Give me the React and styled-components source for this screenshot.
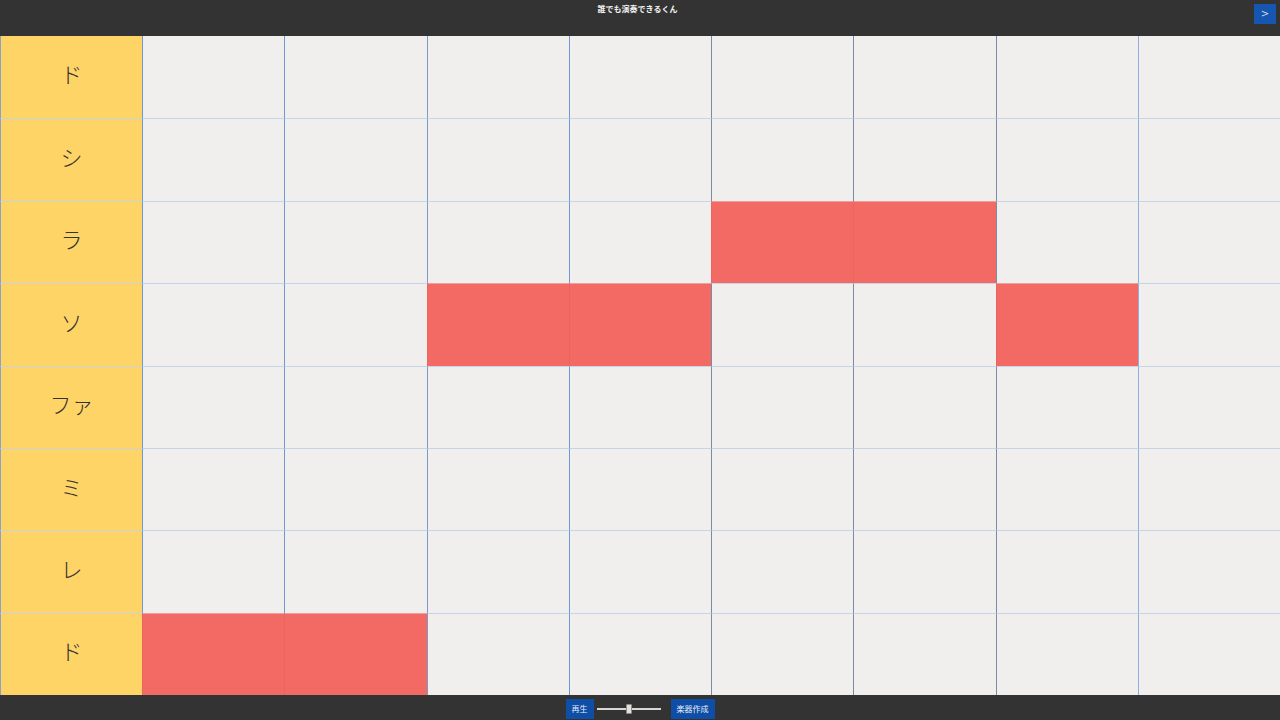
import React from "react";
import styled, { createGlobalStyle } from "styled-components";

const Global = createGlobalStyle`
  html, body { margin: 0; padding: 0; background: #333; }
  body { font-family: "Noto Sans CJK JP", "Noto Sans", sans-serif; }
  * { box-sizing: border-box; }
`;

const Page = styled.div`
  width: 1280px;
  height: 720px;
  display: flex;
  flex-direction: column;
  background: #333333;
  overflow: hidden;
`;

const Header = styled.header`
  height: 36px;
  flex: none;
  position: relative;
  display: flex;
  justify-content: center;
  align-items: flex-start;
`;

const Title = styled.h1`
  margin: 3px 0 0 -5px;
  font-size: 8px;
  font-weight: 700;
  color: #f2f2f2;
  line-height: 12px;
`;

const CornerButton = styled.button`
  position: absolute;
  top: 4px;
  right: 4px;
  width: 22px;
  height: 20px;
  border: none;
  padding: 0;
  background: #1656b0;
  color: #c9d8f0;
  font-family: "DejaVu Sans", sans-serif;
  font-size: 10px;
  line-height: 20px;
`;

const Grid = styled.div`
  height: 659px;
  flex: none;
  display: grid;
  grid-template-columns: repeat(9, 1fr);
  grid-template-rows: repeat(8, 1fr);
  background: #f0efee;
`;

const Label = styled.div`
  background: #ffd466;
  border-left: 1px solid #8aa3c4;
  border-top: ${(p) => (p.$first ? "none" : "1px solid #c8d3e0")};
  display: flex;
  align-items: center;
  justify-content: center;
  padding-bottom: 8px;
  font-size: 22px;
  font-weight: 300;
  color: #333;
`;

const Cell = styled.div`
  background: ${(p) => (p.$on ? "#f26a63" : "#f0efee")};
  border-left: 1px solid ${(p) => (p.$on ? "#e86560" : p.$line)};
  border-top: ${(p) => (p.$first ? "none" : p.$on ? "1px solid #eba09c" : "1px solid #c6d4e8")};
`;

const Footer = styled.footer`
  flex: 1;
  display: flex;
  justify-content: center;
  align-items: center;
  padding-top: 2px;
`;

const SmallButton = styled.button`
  height: 20px;
  padding: 0 6px;
  border: none;
  background: #0e4ea6;
  color: #e6ecf6;
  font-family: "Noto Sans CJK JP", sans-serif;
  font-size: 8px;
  line-height: 20px;
`;

const Slider = styled.div`
  width: 64px;
  height: 20px;
  margin: 0 10px 0 3px;
  position: relative;
  display: flex;
  align-items: center;
`;

const Track = styled.div`
  width: 100%;
  height: 2px;
  background: #d8d6d2;
`;

const Thumb = styled.div`
  position: absolute;
  left: 29px;
  top: 5px;
  width: 6px;
  height: 10px;
  background: #e4e2de;
  border: 1px solid #8d8a84;
  border-radius: 1px;
`;

const notes = ["ド", "シ", "ラ", "ソ", "ファ", "ミ", "レ", "ド"];
const active = {
  2: [4, 5],
  3: [2, 3, 6],
  7: [0, 1],
};
const lineColors = ["#6f97d6", "#6f97d6", "#7e9bc8", "#6f97d6", "#7a8aa8", "#7a8aa8", "#7a8aa8", "#8fb0dc"];

export default function App() {
  return (
    <Page>
      <Global />
      <Header>
        <Title>誰でも演奏できるくん</Title>
        <CornerButton>&gt;</CornerButton>
      </Header>
      <Grid>
        {notes.map((n, r) => (
          <React.Fragment key={r}>
            <Label $first={r === 0}>{n}</Label>
            {Array.from({ length: 8 }, (_, c) => (
              <Cell
                key={c}
                $first={r === 0}
                $on={(active[r] || []).includes(c)}
                $line={lineColors[c]}
              />
            ))}
          </React.Fragment>
        ))}
      </Grid>
      <Footer>
        <SmallButton>再生</SmallButton>
        <Slider>
          <Track />
          <Thumb />
        </Slider>
        <SmallButton>楽器作成</SmallButton>
      </Footer>
    </Page>
  );
}
